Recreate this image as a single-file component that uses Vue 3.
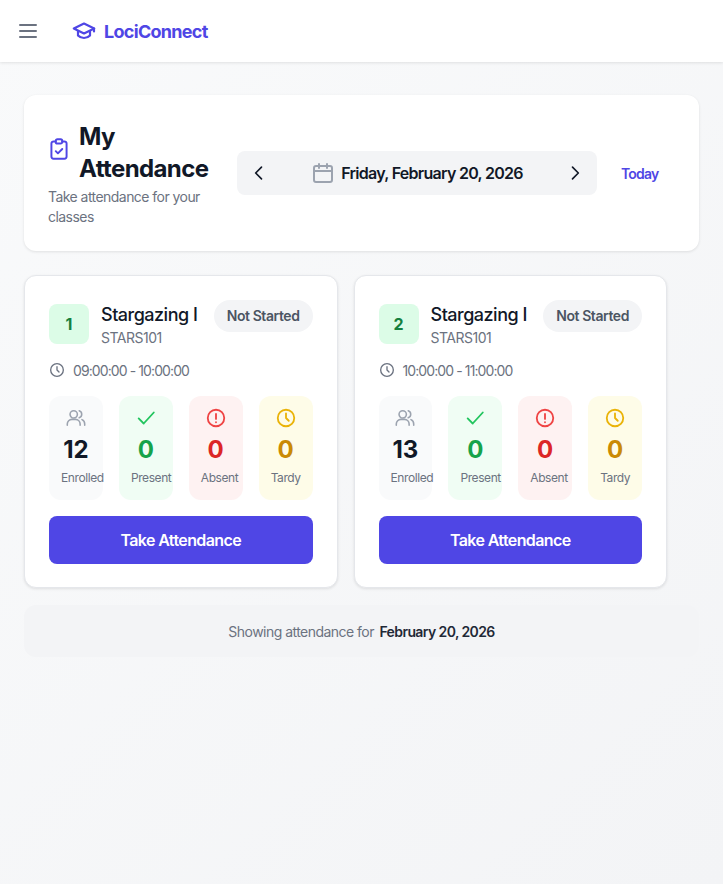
<script setup>
const classes = [
  { n: 1, time: '09:00:00 - 10:00:00', enrolled: 12 },
  { n: 2, time: '10:00:00 - 11:00:00', enrolled: 13 },
]
</script>

<template>
  <div class="page">
    <header class="topbar">
      <svg class="menu" viewBox="0 0 24 24" fill="none" stroke="#6b7280" stroke-width="2" stroke-linecap="round"><path d="M4 6h16M4 12h16M4 18h16"/></svg>
      <div class="brand">
        <svg class="cap" viewBox="0 0 24 24" fill="none" stroke="#4f46e5" stroke-width="2.200" stroke-linejoin="round" stroke-linecap="round"><path d="M12 4.500 1.800 9.500 12 14.500l10.200-5z"/><path d="M6 12v4.500c1.500 1.600 3.600 2.500 6 2.500s4.500-.9 6-2.500V12"/><path d="M22 9.500v3"/></svg>
        <span>LociConnect</span>
      </div>
    </header>
    <main class="main">
      <section class="hero">
        <div class="hero-title">
          <div class="title-row">
            <svg class="clip" viewBox="0 0 24 24" fill="none" stroke="#4f46e5" stroke-width="1.800" stroke-linecap="round" stroke-linejoin="round"><path d="M9 5H7a2 2 0 0 0-2 2v12a2 2 0 0 0 2 2h10a2 2 0 0 0 2-2V7a2 2 0 0 0-2-2h-2"/><rect x="9" y="3" width="6" height="4" rx="1.500"/><path d="m9 14 2 2 4-4"/></svg>
            <h1>My Attendance</h1>
          </div>
          <p>Take attendance for your classes</p>
        </div>
        <div class="datebar">
          <svg class="chev" viewBox="0 0 24 24" fill="none" stroke="#111827" stroke-width="2" stroke-linecap="round" stroke-linejoin="round"><path d="m15 5-7 7 7 7"/></svg>
          <div class="date">
            <svg class="cal" viewBox="0 0 24 24" fill="none" stroke="#9ca3af" stroke-width="2" stroke-linecap="round" stroke-linejoin="round"><rect x="3" y="5" width="18" height="16" rx="2"/><path d="M8 3v4M16 3v4M3 10h18"/></svg>
            <span>Friday, February 20, 2026</span>
          </div>
          <svg class="chev" viewBox="0 0 24 24" fill="none" stroke="#111827" stroke-width="2" stroke-linecap="round" stroke-linejoin="round"><path d="m9 5 7 7-7 7"/></svg>
        </div>
        <button class="today">Today</button>
      </section>

      <section class="cards">
        <article v-for="c in classes" :key="c.n" class="card">
          <div class="card-head">
            <div class="num">{{ c.n }}</div>
            <div class="course">
              <h2>Stargazing I</h2>
              <div class="code">STARS101</div>
            </div>
            <span class="badge">Not Started</span>
          </div>
          <div class="time">
            <svg viewBox="0 0 24 24" fill="none" stroke="#6b7280" stroke-width="2" stroke-linecap="round" stroke-linejoin="round"><circle cx="12" cy="12" r="9.500"/><path d="M12 7v5l3 3"/></svg>
            <span>{{ c.time }}</span>
          </div>
          <div class="stats">
            <div class="stat s-gray">
              <svg viewBox="0 0 24 24" fill="none" stroke="#9ca3af" stroke-width="1.700" stroke-linecap="round" stroke-linejoin="round"><circle cx="9.500" cy="8" r="4"/><path d="M2.500 20v-1.500a5 5 0 0 1 5-5h4a5 5 0 0 1 5 5V20"/><path d="M15.500 4.200a4 4 0 0 1 0 7.600M18.500 13.800a5 5 0 0 1 3 4.700V20"/></svg>
              <strong>{{ c.enrolled }}</strong>
              <small>Enrolled</small>
            </div>
            <div class="stat s-green">
              <svg viewBox="0 0 24 24" fill="none" stroke="#22c55e" stroke-width="2" stroke-linecap="round" stroke-linejoin="round"><path d="m4 12.500 5.500 5.500 11-12"/></svg>
              <strong>0</strong>
              <small>Present</small>
            </div>
            <div class="stat s-red">
              <svg viewBox="0 0 24 24" fill="none" stroke="#ef4444" stroke-width="2" stroke-linecap="round" stroke-linejoin="round"><circle cx="12" cy="12" r="9"/><path d="M12 7.500v5.500M12 16.500v.1"/></svg>
              <strong>0</strong>
              <small>Absent</small>
            </div>
            <div class="stat s-yellow">
              <svg viewBox="0 0 24 24" fill="none" stroke="#eab308" stroke-width="2" stroke-linecap="round" stroke-linejoin="round"><circle cx="12" cy="12" r="9"/><path d="M12 7v5l3 3"/></svg>
              <strong>0</strong>
              <small>Tardy</small>
            </div>
          </div>
          <button class="take">Take Attendance</button>
        </article>
      </section>

      <footer class="note"><span>Showing attendance for</span><b>February 20, 2026</b></footer>
    </main>
  </div>
</template>

<style>
html, body { margin: 0; }
</style>

<style scoped>
* { box-sizing: border-box; }
.page {
  width: 723px;
  height: 884px;
  overflow: hidden;
  background: linear-gradient(135deg, #f9fafb, #f3f4f6);
  font-family: Inter, "Liberation Sans", sans-serif;
  color: #111827;
}
.topbar {
  height: 62px;
  background: #fff;
  box-shadow: 0 1px 3px rgba(0,0,0,.1);
  display: flex;
  align-items: center;
  padding-left: 16px;
}
.menu { width: 24px; height: 24px; }
.brand {
  margin-left: 32px;
  display: flex;
  align-items: center;
  gap: 8px;
  color: #4f46e5;
  font-size: 18px;
  font-weight: 700;
  letter-spacing: -.7px;
}
.cap { width: 24px; height: 24px; }
.main { padding: 33px 24px 0; }
.hero {
  height: 156px;
  background: #fff;
  border-radius: 12px;
  box-shadow: 0 1px 3px rgba(0,0,0,.1);
  padding: 24px;
  display: flex;
  align-items: center;
}
.hero-title { width: 165px; flex: none; }
.title-row { display: flex; align-items: center; gap: 7px; }
.clip { width: 26px; height: 26px; flex: none; margin: 0 0 6px -2px; }
h1 { margin: 1px 0 0; font-size: 24px; line-height: 32px; font-weight: 700; letter-spacing: -.6px; }
.hero-title p { margin: 0; font-size: 14px; line-height: 20px; color: #6b7280; padding-top: 2px; letter-spacing: -.55px; }
.datebar {
  margin-left: 24px;
  width: 360px;
  height: 44px;
  background: #f3f4f6;
  border-radius: 8px;
  display: flex;
  align-items: center;
  justify-content: space-between;
  padding: 0 12px;
}
.chev { width: 20px; height: 20px; }
.date { display: flex; align-items: center; gap: 6px; font-size: 16px; font-weight: 600; letter-spacing: -.72px; }
.cal { width: 24px; height: 24px; }
.today {
  margin-left: 24px;
  padding: 0;
  background: none;
  border: 0;
  font: 600 14px Inter, sans-serif;
  letter-spacing: -.8px;
  color: #4f46e5;
}
.cards { margin-top: 24px; display: flex; gap: 16px; }
.card {
  width: 313.500px;
  height: 313px;
  background: #fff;
  border: 1px solid #e5e7eb;
  border-radius: 12px;
  box-shadow: 0 1px 3px rgba(0,0,0,.1);
  padding: 24px;
}
.card-head { display: flex; align-items: center; height: 48px; }
.num {
  width: 40px;
  height: 40px;
  flex: none;
  background: #dcfce7;
  border-radius: 8px;
  color: #15803d;
  font-weight: 700;
  font-size: 16px;
  display: flex;
  align-items: center;
  justify-content: center;
}
.course { margin-left: 12px; flex: 1; min-width: 0; }
h2 { margin: 0; padding-top: 1px; font-size: 18px; line-height: 27px; font-weight: 500; letter-spacing: -.5px; }
.code { font-size: 14px; line-height: 20px; color: #6b7280; letter-spacing: -.5px; }
.badge {
  align-self: flex-start;
  background: #f3f4f6;
  color: #4b5563;
  border-radius: 999px;
  padding: 0 13px;
  height: 32px;
  line-height: 32px;
  font-size: 14px;
  font-weight: 600;
  letter-spacing: -.42px;
  white-space: nowrap;
}
.time {
  margin-top: 12px;
  display: flex;
  align-items: center;
  gap: 8px;
  height: 20px;
  font-size: 14px;
  color: #6b7280;
  letter-spacing: -.9px;
}
.time svg { width: 16px; height: 16px; }
.stats { margin-top: 16px; display: grid; grid-template-columns: repeat(4, 1fr); gap: 16px; }
.stat {
  height: 104px;
  border-radius: 12px;
  padding: 11px 12px 0;
  text-align: center;
  min-width: 0;
}
.stat svg { display: block; width: 22px; height: 22px; margin: 0 auto; }
.stat strong { display: block; font-size: 24px; line-height: 32px; font-weight: 700; margin-top: 5px; }
.stat small { display: block; font-size: 12px; line-height: 16px; color: #6b7280; margin-top: 4px; white-space: nowrap; letter-spacing: -.4px; }
.s-gray { background: #f9fafb; }
.s-green { background: #f0fdf4; }
.s-green strong { color: #16a34a; }
.s-red { background: #fef2f2; }
.s-red strong { color: #dc2626; }
.s-yellow { background: #fefce8; }
.s-yellow strong { color: #ca8a04; }
.take {
  margin-top: 16px;
  width: 100%;
  height: 48px;
  border: 0;
  border-radius: 8px;
  background: #4f46e5;
  color: #fff;
  font: 600 16px Inter, sans-serif;
  letter-spacing: -.6px;
}
.note {
  margin-top: 17px;
  height: 52px;
  background: #f3f4f6;
  border-radius: 12px;
  display: flex;
  align-items: center;
  justify-content: center;
  gap: 5.500px;
  font-size: 14px;
  color: #6b7280;
  letter-spacing: -.53px;
}
.note b { color: #1f2937; font-weight: 600; letter-spacing: -.6px; }
</style>
